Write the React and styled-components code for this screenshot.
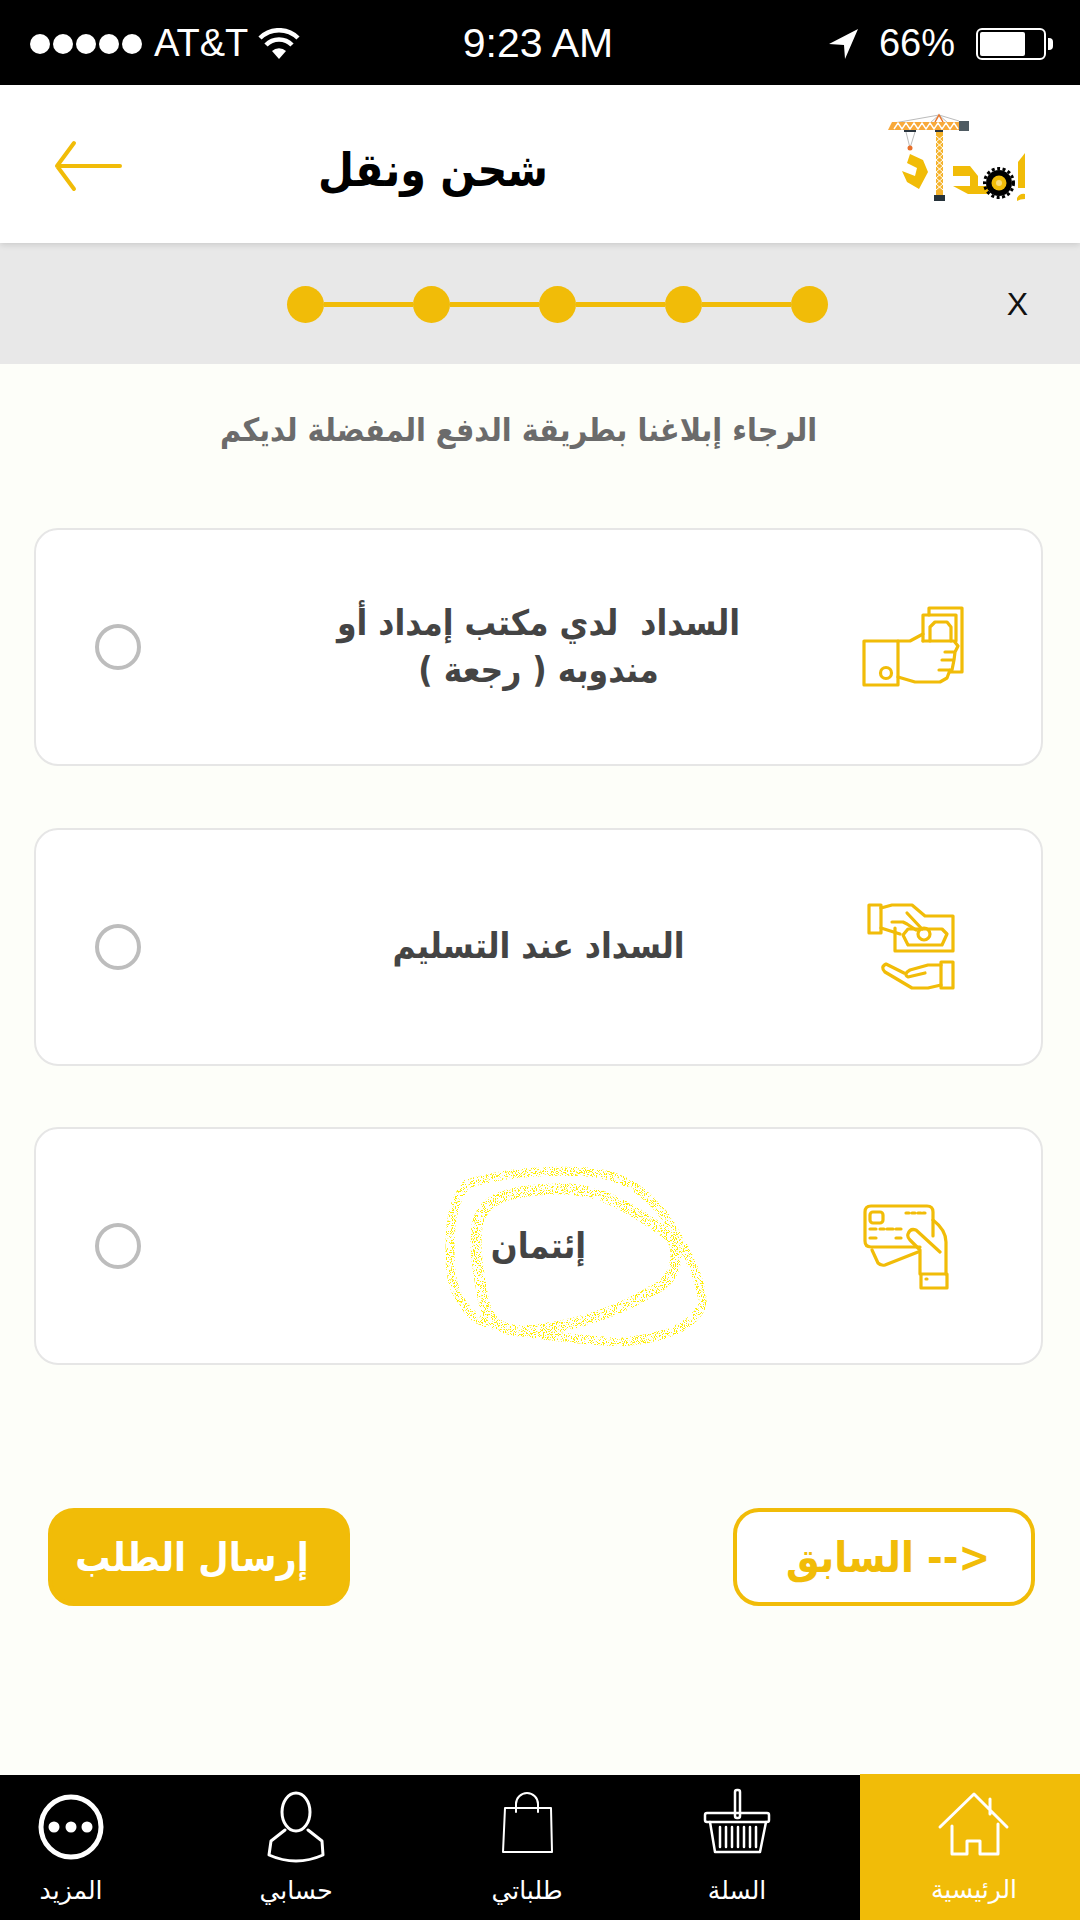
import React from 'react'
import styled, { createGlobalStyle } from 'styled-components'

const YELLOW = '#f1bc08'
const ARABIC = '"DejaVu Sans Condensed", "DejaVu Sans", sans-serif'

const Global = createGlobalStyle`
	html, body { margin: 0; padding: 0; background: #fdfef9; }
	* { box-sizing: border-box; }
`

const Screen = styled.div`
	width: 1080px;
	height: 1920px;
	display: flex;
	flex-direction: column;
	overflow: hidden;
	background: #fdfef9;
	font-family: ${ARABIC};
`

/* status bar */
const StatusBar = styled.div`
	height: 85px;
	flex: none;
	background: #000;
	color: #fff;
	display: grid;
	grid-template-columns: 1fr auto 1fr;
	align-items: center;
	padding: 2px 34px 0 30px;
	font-family: "Liberation Sans", Arial, sans-serif;
	font-size: 38px;
`
const StatusLeft = styled.div`
	display: flex;
	align-items: center;
`
const StatusRight = styled.div`
	display: flex;
	align-items: center;
	justify-content: flex-end;
`
const Clock = styled.span`
	font-size: 41px;
`
const Signal = styled.div`
	display: flex;
	gap: 3px;
	margin-right: 12px;
`
const SignalDot = styled.span`
	width: 20px;
	height: 20px;
	border-radius: 50%;
	background: #fff;
`
const Battery = styled.div`
	width: 70px;
	height: 32px;
	margin-left: 21px;
	padding: 2px;
	border: 2px solid #fff;
	border-radius: 6px;
	position: relative;
	&::after {
		content: '';
		position: absolute;
		right: -9px;
		top: 8px;
		width: 5px;
		height: 12px;
		border-radius: 0 4px 4px 0;
		background: #fff;
	}
`
const BatteryFill = styled.div`
	height: 100%;
	background: #fff;
	border-radius: 2px;
`
const StatusIcon = styled.svg`
	margin: ${p => p.$margin || 0};
`

/* header */
const Header = styled.header`
	height: 158px;
	flex: none;
	background: #fff;
	display: grid;
	grid-template-columns: 190px 486px 1fr;
	align-items: center;
	box-shadow: 0 2px 6px rgba(0, 0, 0, 0.12);
	position: relative;
`
const BackArrow = styled.svg`
	width: 80px;
	height: 60px;
	margin: 4px 0 0 50px;
`
const Title = styled.h1`
	margin: 11px 0 0;
	text-align: center;
	font-size: 46px;
	font-weight: 700;
	color: #000;
	font-family: ${ARABIC};
`
const Logo = styled.svg`
	width: 170px;
	height: 110px;
	justify-self: end;
	align-self: start;
	margin: 15px 40px 0 0;
`

/* stepper */
const StepperBar = styled.div`
	height: 121px;
	flex: none;
	background: #e8e8e8;
	display: flex;
	align-items: center;
	justify-content: space-between;
	padding: 2px 52px 0 287px;
`
const Steps = styled.div`
	display: flex;
	align-items: center;
`
const StepDot = styled.span`
	width: 37px;
	height: 37px;
	border-radius: 50%;
	background: ${YELLOW};
`
const StepLine = styled.span`
	width: 89px;
	height: 5px;
	background: ${YELLOW};
`
const CloseX = styled.span`
	font-family: "Liberation Sans", Arial, sans-serif;
	font-size: 32px;
	color: #111;
`

/* main content */
const Main = styled.main`
	flex: 1;
	display: flex;
	flex-direction: column;
	direction: rtl;
	padding: 0 37px 0 34px;
`
const Prompt = styled.p`
	margin: 45px 0 0;
	padding-right: 40px;
	height: 66px;
	line-height: 42px;
	text-align: center;
	font-size: 32px;
	font-weight: 700;
	color: #6b6b6b;
`
const Options = styled.div`
	display: flex;
	flex-direction: column;
	gap: 61.5px;
	margin-top: 53px;
`
const Option = styled.div`
	height: 238px;
	background: #fff;
	border: 2px solid #e6e6e6;
	border-radius: 24px;
	display: grid;
	grid-template-columns: 201px 1fr 201px;
	align-items: center;
	position: relative;
`
const OptionIcon = styled.svg`
	width: 140px;
	height: 140px;
	margin-right: 61px;
	fill: none;
	stroke: ${YELLOW};
	stroke-width: 3.2;
	stroke-linejoin: round;
	stroke-linecap: round;
`
const OptionLabel = styled.div`
	max-width: 470px;
	justify-self: center;
	text-align: center;
	font-size: 35px;
	font-weight: 700;
	line-height: 47px;
	color: #444;
`
const Radio = styled.span`
	width: 46px;
	height: 46px;
	justify-self: end;
	margin-left: 59px;
	border: 4px solid #bdbdbd;
	border-radius: 50%;
`
const Scribble = styled.svg`
	position: absolute;
	left: 384px;
	top: 20px;
	width: 300px;
	height: 200px;
	fill: none;
	stroke: #ffee00;
	stroke-width: 11;
	stroke-linecap: round;
	pointer-events: none;
`
const Actions = styled.div`
	display: flex;
	justify-content: space-between;
	margin: 143px 8px 0 14px;
`
const ActionButton = styled.button`
	width: 302px;
	height: 98px;
	padding: ${p => (p.$filled ? '0 14px 0 0' : '0 0 0 8px')};
	border-radius: 26px;
	border: 4px solid ${YELLOW};
	background: ${p => (p.$filled ? YELLOW : '#fff')};
	color: ${p => (p.$filled ? '#fff' : YELLOW)};
	font-family: ${ARABIC};
	font-size: ${p => (p.$filled ? '39px' : '42px')};
	font-weight: 700;
	direction: rtl;
`

/* bottom nav */
const BottomNav = styled.nav`
	height: 145px;
	flex: none;
	background: #000;
	direction: rtl;
	display: grid;
	grid-template-columns: 220px 246px 174px 288px 152px;
	font-family: "DejaVu Sans", sans-serif;
`
const Tab = styled.div`
	display: flex;
	flex-direction: column;
	align-items: center;
	padding: 10px 0 0 ${p => (p.$active ? '8px' : '0')};
	background: ${p => (p.$active ? YELLOW : 'transparent')};
	margin-top: ${p => (p.$active ? '-1px' : '0')};
	color: #fff;
	font-size: 25px;
	&:last-child {
		padding-right: 10px;
	}
`
const TabIcon = styled.svg`
	width: 100px;
	height: 80px;
	fill: none;
	stroke: #fff;
	stroke-width: ${p => p.$weight || 2.5};
	stroke-linejoin: round;
	stroke-linecap: round;
`
const TabLabel = styled.span`
	margin-top: 8px;
	line-height: 36px;
`

const Wifi = () => (
	<StatusIcon width="42" height="32" viewBox="0 0 42 32" $margin="0 0 0 10px">
		<path d="M21 31 L14 23 A10 10 0 0 1 28 23 Z" fill="#fff" />
		<path d="M8 17 A18 18 0 0 1 34 17" fill="none" stroke="#fff" strokeWidth="4.5" />
		<path d="M2 10 A27 27 0 0 1 40 10" fill="none" stroke="#fff" strokeWidth="4.5" />
	</StatusIcon>
)

const Arrow = () => (
	<StatusIcon width="30" height="32" viewBox="0 0 30 32" $margin="0 20px 0 0">
		<path d="M0 16 L29 1 L16 31 L15 17 Z" fill="#fff" />
	</StatusIcon>
)

const CraneLogo = () => (
	<Logo viewBox="0 0 170 110">
		<path d="M60 23 L69 15 L89 21 M78 23 L69 15 L24 23" fill="none" stroke="#bbb" strokeWidth="1" />
		<path d="M65 22 L69 15 L73 22" fill="none" stroke="#e8762b" strokeWidth="1.5" />
		<path d="M22 22 H89 V30 H18 Z" fill="#f8a93a" />
		<path d="M24 29 L28 23 L32 29 L36 23 L40 29 L44 23 L48 29 L52 23 L56 29 L60 23 L64 29 L68 23 L72 29 L76 23 L80 29 L84 23 L88 29" fill="none" stroke="#fff" strokeWidth="1.4" />
		<rect x="89" y="21" width="10" height="10" fill="#4f5b62" />
		<rect x="34" y="30" width="12" height="2" fill="#2b3640" />
		<rect x="65" y="30" width="8" height="2" fill="#2b3640" />
		<rect x="66" y="32" width="7" height="63" fill="#f5b32b" />
		<path d="M66 36 L73 42 L66 48 L73 54 L66 60 L73 66 L66 72 L73 78 L66 84 L73 90 M73 36 L66 42 L73 48 L66 54 L73 60 L66 66 L73 72 L66 78 L73 84 L66 90" fill="none" stroke="#fff" strokeWidth="1" />
		<rect x="64" y="95" width="11" height="6" fill="#26323a" />
		<path d="M36 32 L40 48 L45 32" fill="none" stroke="#bbb" strokeWidth="1" />
		<circle cx="40" cy="48" r="2.5" fill="#e8702a" />
		<path d="M40 54 L53 60 L58 72 L49 89 L37 82 L32 71 L45 76 L47 68 L37 63 Z" fill={YELLOW} />
		<path d="M83 66 H100 L108 76 V86 H118 V94 H98 L83 86 H100 V76 H83 Z" fill={YELLOW} />
		<circle cx="129" cy="83" r="13" fill="#000" />
		<circle cx="129" cy="83" r="14.5" fill="none" stroke="#000" strokeWidth="3" strokeDasharray="3 2.5" />
		<circle cx="129" cy="83" r="7.5" fill={YELLOW} />
		<circle cx="129" cy="83" r="3" fill="#f9dc7a" />
		<path d="M148 62 L155 53 V88 H148 Z" fill={YELLOW} />
		<path d="M147 98 Q150 93 155 94 V99 Q150 99 147 101 Z" fill={YELLOW} />
	</Logo>
)

const HandCash = () => (
	<OptionIcon viewBox="0 -3 140 140">
		<rect x="24" y="61" width="34" height="44" />
		<circle cx="46" cy="93" r="5.5" />
		<path d="M58 61 H70 L83 54" />
		<path d="M83 61 V35 H116 V61" />
		<path d="M89 35 V28 H122 V92 H110" />
		<path d="M90 61 V47 L95 42 H107 L111 47 V61" />
		<path d="M83 61 H114 L118 66 L115 72 H105 M115 72 L114 80 H102 M114 80 L112 90 H99 M110 90 L107 98 L100 102 H75 L58 97" />
	</OptionIcon>
)

const HandsExchange = () => (
	<OptionIcon viewBox="-10 -3 140 140">
		<rect x="19" y="25" width="12" height="28" />
		<path d="M31 28 L42 25 H62 L75 36 H103 V71 H45 V48" />
		<path d="M31 48 L50 54" />
		<path d="M42 42 H53 L57 44 L66 50" />
		<path d="M57 33 L72 49" />
		<path d="M53 55 L58 49 H92 L97 54 L92 65 H58 Z" />
		<circle cx="74" cy="54" r="6" />
		<rect x="91" y="82" width="12" height="26" />
		<path d="M91 85 H78 L60 90 Q53 94 58 97 L75 93" />
		<path d="M91 105 L78 108 H62 L35 92 Q30 87 36 84 L54 93" />
	</OptionIcon>
)

const CardHand = () => (
	<OptionIcon viewBox="-10 -14 140 140">
		<path d="M70 57 H21 Q15 57 15 51 V22 Q15 16 21 16 H77 Q83 16 83 22 V46" />
		<rect x="20" y="22" width="13" height="11" rx="3" />
		<path d="M56 23 H59 M62 23 H65 M68 23 H71 M73 23 H75" />
		<path d="M20 39 H26 M30 39 H34 M37 39 H43 M46 39 H51 M20 48 H26 M46 48 H51" />
		<path d="M90 62 L66 40 Q60 38 58 44 Q57 47 60 50 L70 60 V84" />
		<path d="M83 30 Q96 40 96 52 V84" />
		<path d="M22 60 L28 73 Q31 76 35 75 L68 62" />
		<rect x="71" y="84" width="26" height="14" />
		<path d="M76 89 H77" />
	</OptionIcon>
)

const HomeIcon = () => (
	<TabIcon viewBox="0 0 100 80" $weight="3">
		<path d="M16 43 L50 10 L83 43 M66 15 V30 M28 42 V70 H43 V57 H56 V70 H74 V40" />
	</TabIcon>
)
const BasketIcon = () => (
	<TabIcon viewBox="0 0 100 80">
		<rect x="48" y="5" width="5" height="28" rx="2" />
		<rect x="18" y="28" width="64" height="9" rx="2" />
		<path d="M23 37 L28 67 H73 L79 37 M33 42 V62 M39 42 V62 M45 42 V62 M51 42 V62 M57 42 V62 M63 42 V62 M69 42 V62" />
	</TabIcon>
)
const BagIcon = () => (
	<TabIcon viewBox="0 0 100 80" $weight="2">
		<path d="M28 23 H74 L75 67 H26 Z M39 27 V19 A11 11 0 0 1 61 19 V27" />
	</TabIcon>
)
const PersonIcon = () => (
	<TabIcon viewBox="0 0 100 80" $weight="3">
		<ellipse cx="50" cy="27" rx="14" ry="19" />
		<path d="M39 45 L25 56 L23 70 Q50 82 77 70 L76 56 L62 45" />
	</TabIcon>
)
const MoreIcon = () => (
	<TabIcon viewBox="0 0 100 80" $weight="5">
		<circle cx="50" cy="42" r="30" />
		<circle cx="33" cy="42" r="3" fill="#fff" />
		<circle cx="50" cy="42" r="3" fill="#fff" />
		<circle cx="66" cy="42" r="3" fill="#fff" />
	</TabIcon>
)

const options = [
	{ id: 'office', icon: <HandCash />, label: <>السداد &nbsp;لدي مكتب إمداد أو<br />مندوبه ( رجعة )</> },
	{ id: 'delivery', icon: <HandsExchange />, label: 'السداد عند التسليم' },
	{ id: 'credit', icon: <CardHand />, label: 'إئتمان', marked: true },
]

const tabs = [
	{ label: 'الرئيسية', icon: <HomeIcon />, active: true },
	{ label: 'السلة', icon: <BasketIcon /> },
	{ label: 'طلباتي', icon: <BagIcon /> },
	{ label: 'حسابي', icon: <PersonIcon /> },
	{ label: 'المزيد', icon: <MoreIcon /> },
]

export default function App() {
	return (
		<Screen>
			<Global />
			<StatusBar>
				<StatusLeft>
					<Signal>{[0, 1, 2, 3, 4].map(i => <SignalDot key={i} />)}</Signal>
					AT&amp;T
					<Wifi />
				</StatusLeft>
				<Clock>9:23 AM</Clock>
				<StatusRight>
					<Arrow />
					66%
					<Battery><BatteryFill style={{ width: '72%' }} /></Battery>
				</StatusRight>
			</StatusBar>

			<Header>
				<BackArrow viewBox="0 0 80 60" fill="none" stroke={YELLOW} strokeWidth="4" strokeLinecap="round" strokeLinejoin="round">
					<path d="M24 7 L7 30 L24 53 M7 30 H70" />
				</BackArrow>
				<Title dir="rtl">شحن ونقل</Title>
				<CraneLogo />
			</Header>

			<StepperBar>
				<Steps>
					{[0, 1, 2, 3, 4].map(i => (
						<React.Fragment key={i}>
							{i > 0 && <StepLine />}
							<StepDot />
						</React.Fragment>
					))}
				</Steps>
				<CloseX>X</CloseX>
			</StepperBar>

			<Main>
				<Prompt>الرجاء إبلاغنا بطريقة الدفع المفضلة لديكم</Prompt>
				<Options>
					{options.map(o => (
						<Option key={o.id}>
							{o.icon}
							<OptionLabel>{o.label}</OptionLabel>
							<Radio />
							{o.marked && (
								<Scribble viewBox="0 0 300 200" dir="ltr">
									<defs>
										<filter id="chalk" x="-5%" y="-5%" width="110%" height="110%">
											<feTurbulence type="fractalNoise" baseFrequency="0.9" numOctaves="2" seed="4" />
											<feColorMatrix values="0 0 0 0 0  0 0 0 0 0  0 0 0 0 0  0 0 0 -20 9" />
											<feComposite in="SourceGraphic" operator="in" />
										</filter>
									</defs>
									<g filter="url(#chalk)">
										<path d="M57 77 C62 50 85 42 133 40 C170 38 200 50 250 87 C260 100 258 125 240 137 C200 163 150 180 100 182 C72 180 65 165 62 143 C58 120 54 100 57 77 Z" />
										<path d="M47 35 C34 50 30 70 30 100 C30 130 33 150 57 170 C90 185 150 190 200 193 C240 190 275 180 283 153 C280 125 265 100 247 70 C225 40 200 25 167 23 C130 21 90 22 47 35 Z" strokeWidth="9" strokeDasharray="90 6 60 10 120 8" />
									</g>
								</Scribble>
							)}
						</Option>
					))}
				</Options>
				<Actions>
					<ActionButton>{'<-- السابق'}</ActionButton>
					<ActionButton $filled>إرسال الطلب</ActionButton>
				</Actions>
			</Main>

			<BottomNav>
				{tabs.map(t => (
					<Tab key={t.label} $active={t.active}>
						{t.icon}
						<TabLabel>{t.label}</TabLabel>
					</Tab>
				))}
			</BottomNav>
		</Screen>
	)
}
